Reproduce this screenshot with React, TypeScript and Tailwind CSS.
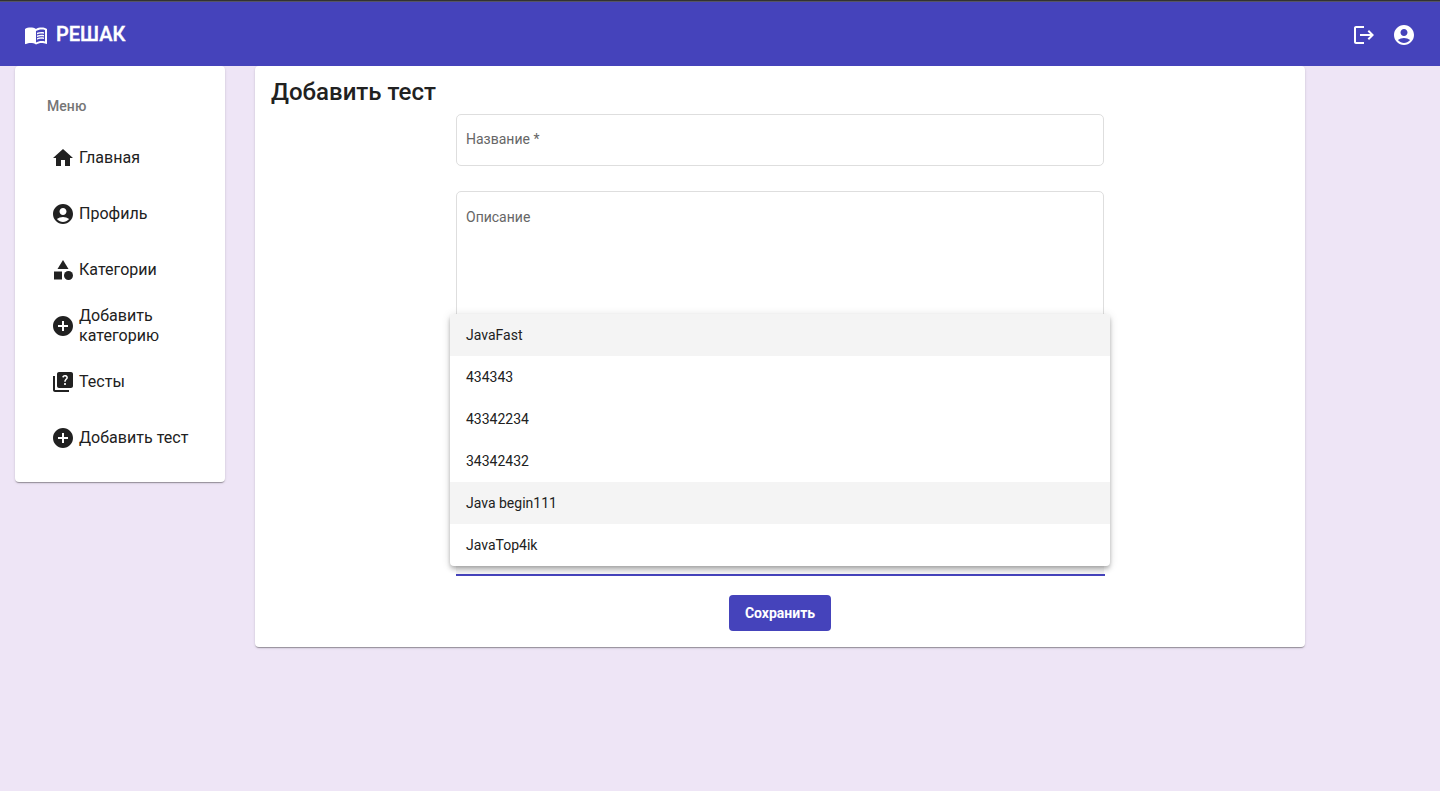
import type { ReactNode } from "react";
import { MdAccountCircle, MdAddCircle, MdCategory, MdHome, MdLogout, MdMenuBook, MdQuiz } from "react-icons/md";

const menu: { label: string; icon: ReactNode }[] = [
  { label: "Главная", icon: <MdHome size={24} /> },
  { label: "Профиль", icon: <MdAccountCircle size={24} /> },
  { label: "Категории", icon: <MdCategory size={24} /> },
  { label: "Добавить категорию", icon: <MdAddCircle size={24} /> },
  { label: "Тесты", icon: <MdQuiz size={24} /> },
  { label: "Добавить тест", icon: <MdAddCircle size={24} /> },
];

const options = [
  { label: "JavaFast", active: true },
  { label: "434343", active: false },
  { label: "43342234", active: false },
  { label: "34342432", active: false },
  { label: "Java begin111", active: true },
  { label: "JavaTop4ik", active: false },
];

function Header() {
  return (
    <header className="relative z-10 flex h-[66px] items-center justify-between border-t border-[#323232] bg-[#4543bb] px-6 text-white shadow-[inset_0_1px_0_#555465]">
      <div className="flex items-center gap-2 pt-px">
        <MdMenuBook size={24} className="mt-0.5" />
        <span className="text-[20px] leading-8 font-medium [-webkit-text-stroke:0.4px_white]">РЕШАК</span>
      </div>
      <div className="flex items-center gap-4 pt-[3px]">
        <MdLogout size={24} />
        <MdAccountCircle size={24} />
      </div>
    </header>
  );
}

function Sidebar() {
  return (
    <nav className="h-[416px] w-[210px] rounded bg-white px-8 pt-8 shadow-[0_2px_1px_-1px_rgba(0,0,0,0.2),0_1px_1px_0_rgba(0,0,0,0.14),0_1px_3px_0_rgba(0,0,0,0.12)]">
      <h3 className="h-8 text-sm leading-4 font-medium tracking-[0.05px] text-[#757575]">Меню</h3>
      <ul>
        {menu.map((item) => (
          <li key={item.label} className="flex h-14 items-center gap-1 pl-1 text-base leading-5 tracking-[0.03px]">
            <span className="shrink-0">{item.icon}</span>
            <span className="-mr-4 w-[114px] shrink-0">{item.label}</span>
          </li>
        ))}
      </ul>
    </nav>
  );
}

function Options() {
  return (
    <ul className="absolute top-[248px] left-[195px] z-20 w-[660px] overflow-hidden rounded bg-white text-sm shadow-[0_2px_4px_-1px_rgba(0,0,0,0.2),0_4px_5px_0_rgba(0,0,0,0.14),0_1px_10px_0_rgba(0,0,0,0.12)]">
      {options.map((o) => (
        <li key={o.label} className={o.active ? "flex h-[42px] items-center bg-[#f4f4f4] px-4" : "flex h-[42px] items-center px-4"}>
          {o.label}
        </li>
      ))}
    </ul>
  );
}

export default function App() {
  return (
    <div className="min-h-screen bg-[#eee5f6] font-['Roboto',sans-serif] text-[#212121]">
      <Header />
      <div className="flex items-start gap-[30px] pl-[15px]">
        <Sidebar />
        <main className="relative h-[581px] w-[1050px] rounded bg-white px-4 pt-2 shadow-[0_2px_1px_-1px_rgba(0,0,0,0.2),0_1px_1px_0_rgba(0,0,0,0.14),0_1px_3px_0_rgba(0,0,0,0.12)]">
          <h1 className="h-10 text-2xl leading-9 font-medium">Добавить тест</h1>
          <form className="mx-auto flex w-[648px] flex-col items-center">
            <div className="h-[52px] w-full rounded-[5px] border border-[#dedede] px-[9px] text-sm leading-[48px] text-[#666666]">
              Название *
            </div>
            <div className="mt-[25px] h-[160px] w-full rounded-[5px] border border-[#dedede] px-[9px] pt-[15px] text-sm leading-5 text-[#666666]">
              Описание
            </div>
            <div className="mt-[169px] h-[56px] w-full bg-[#f5f5f5] pt-[54px]">
              <div className="h-0.5 w-[649px] bg-[#4543bb]" />
            </div>
            <button type="button" className="mt-[19px] h-9 w-[102px] rounded bg-[#4543bb] text-sm font-bold text-white">
              Сохранить
            </button>
          </form>
          <Options />
        </main>
      </div>
    </div>
  );
}
